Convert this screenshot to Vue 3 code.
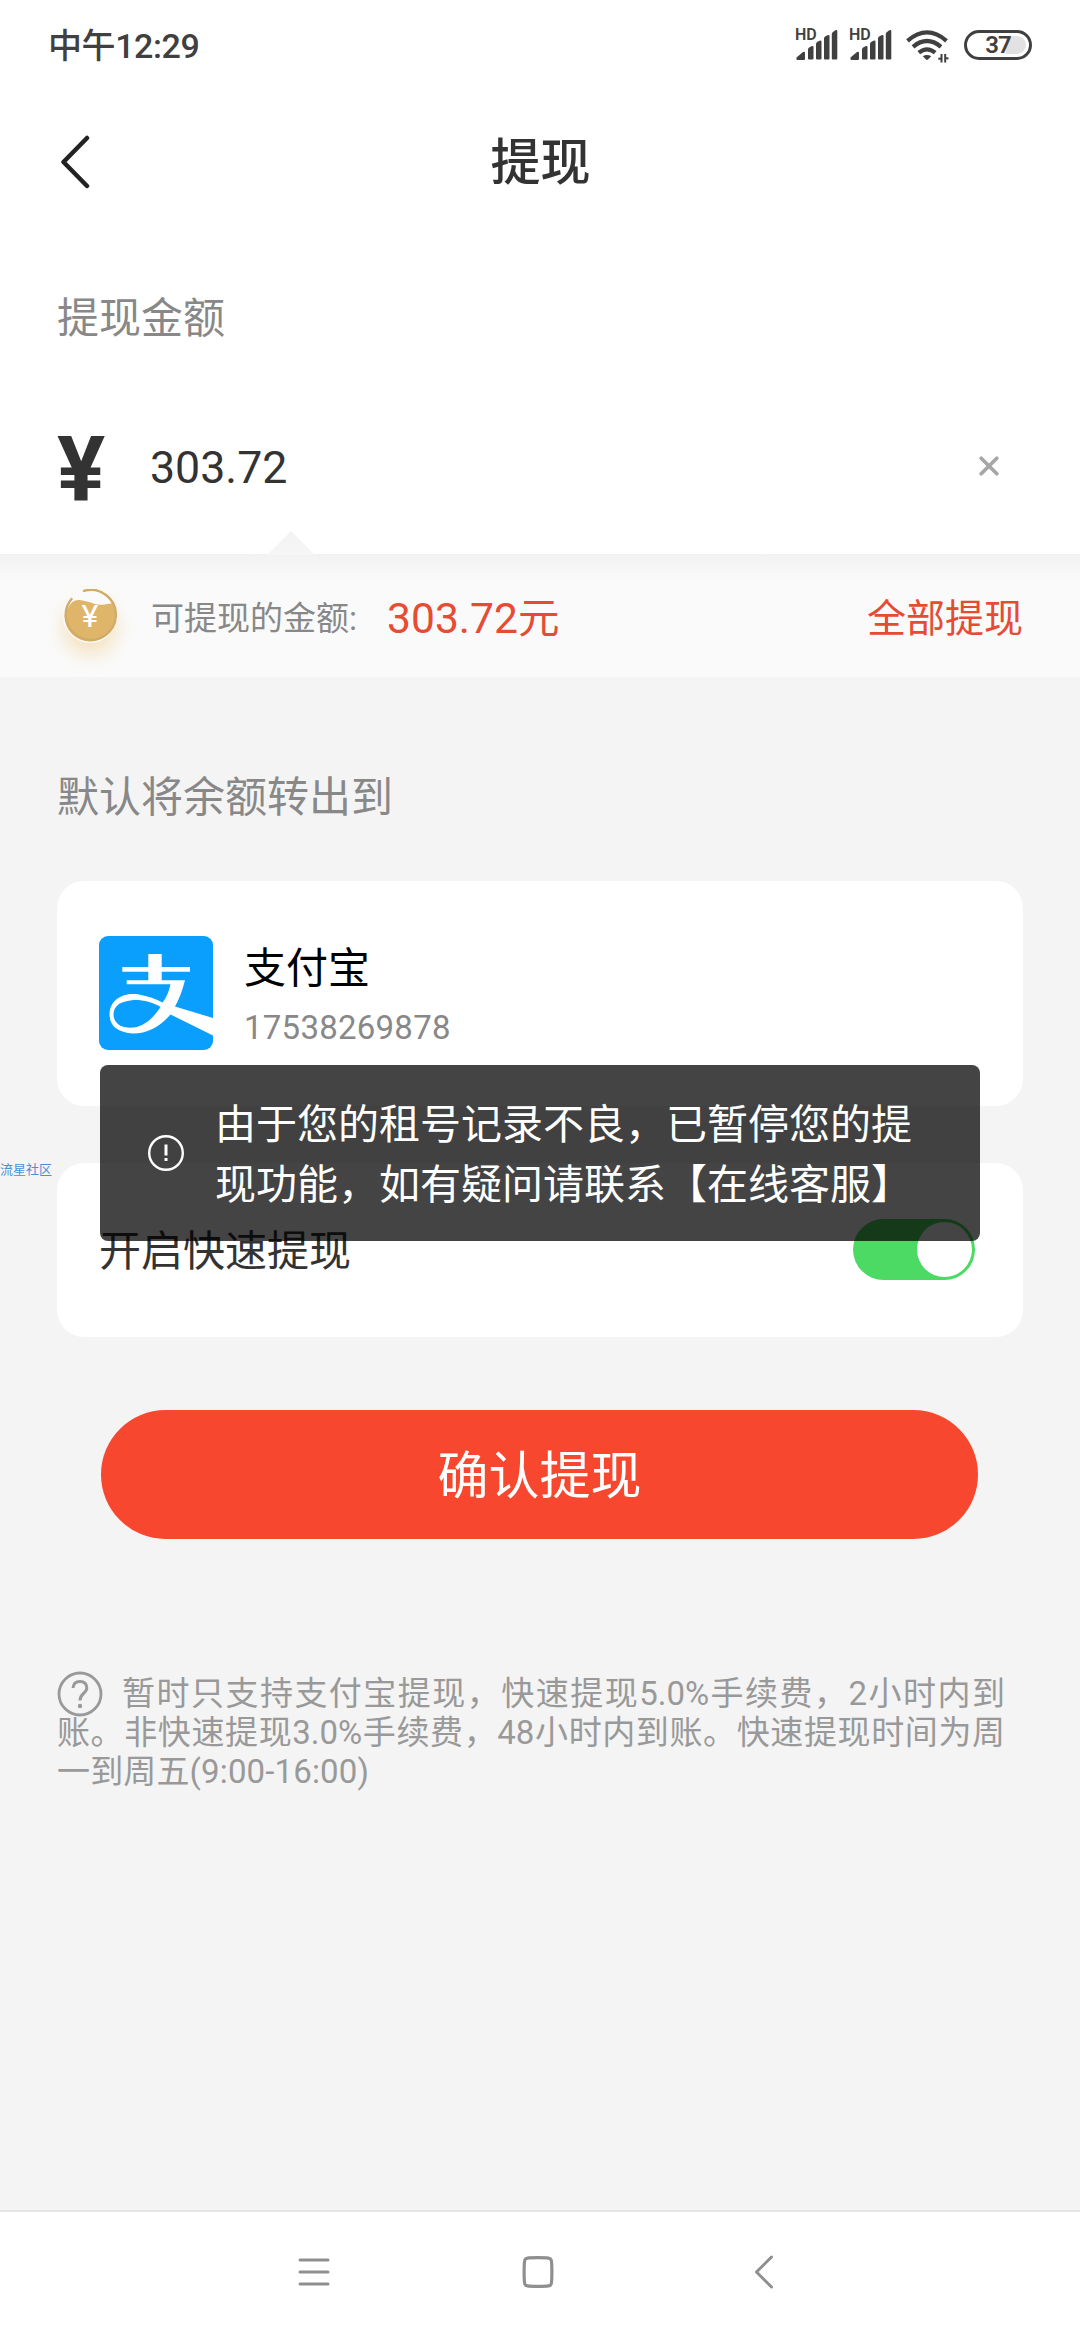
<script setup>
const simCards = [1, 2]
const account = { name: '支付宝', number: '17538269878' }
const balance = '303.72'
</script>

<template>
  <div class="page">
    <header class="status">
      <span class="time">中午12:29</span>
      <div class="indicators">
        <div v-for="sim in simCards" :key="sim" class="sim">
          <span class="hd">HD</span>
          <svg width="42" height="30" viewBox="0 0 42 30" fill="#404040">
            <path d="M.5 29v-1.5L7 22q2-1 2 1v6q0 1-1 1H1.500q-1 0-1-1z" />
            <path d="M12 19.500q0-1.500 1.500-2.200l2-1q2-.8 2 1V28.500q0 1-1 1H13q-1 0-1-1z" />
            <path d="M20 14q0-1.500 1.500-2.200l2-1q2-.8 2 1V28.500q0 1-1 1H21q-1 0-1-1z" />
            <path d="M28 8.500q0-1.500 1.500-2.200l2-1q2-.8 2 1V28.500q0 1-1 1H29q-1 0-1-1z" />
            <path d="M35.800 4q0-1.500 1.500-2.200l2-1.500q2-.8 2 1V28.500q0 1-1 1h-3.500q-1 0-1-1z" />
          </svg>
        </div>
        <svg class="wifi" width="44" height="34" viewBox="0 0 44 34" fill="none" stroke="#404040" stroke-width="4.200">
          <path d="M1.500 10.800Q21 -6 40.500 10.800" />
          <path d="M7 16.800Q21 5.200 35 16.800" />
          <path d="M12.800 22.600Q21 16 29.200 22.600" />
          <path d="M16.800 26.300Q21 23.500 25.200 26.300L22 29.500Q21 30.300 20 29.500z" fill="#404040" stroke="none" />
          <path d="M35.500 24v8.500M32.300 28.500l3.200.5M39.200 32.500V24M42.500 28.500l-3.300-.5" stroke-width="2" />
        </svg>
        <div class="battery">
          <i class="level"></i>
          <span>37</span>
        </div>
      </div>
    </header>

    <nav class="bar">
      <svg class="back" width="32" height="56" viewBox="0 0 32 56" fill="none" stroke="#222" stroke-width="4.500" stroke-linecap="round" stroke-linejoin="round">
        <path d="M29 4L5.500 28L29 52" />
      </svg>
      <h1>提现</h1>
    </nav>

    <section class="amount">
      <p class="label">提现金额</p>
      <div class="entry">
        <span class="yen">¥</span>
        <span class="value">{{ balance }}</span>
        <svg class="clear" width="20" height="20" viewBox="0 0 20 20" stroke="#a6a6a6" stroke-width="3.700" stroke-linecap="round">
          <path d="M2.200 2.200l15.600 15.600M17.800 2.200L2.200 17.800" />
        </svg>
      </div>
    </section>

    <section class="available">
      <svg class="pointer" width="48" height="24" viewBox="0 0 48 24">
        <defs>
          <linearGradient id="tip" x1="0" y1="0" x2="0" y2="1">
            <stop offset="0" stop-color="#f3f3f3" />
            <stop offset="1" stop-color="#f6f6f6" />
          </linearGradient>
        </defs>
        <path d="M24 0l24 24H0z" fill="url(#tip)" />
      </svg>
      <div class="coin">
        <svg width="54" height="54" viewBox="0 0 54 54" fill="none">
          <path d="M5 19Q9 10 17 11q10 2 15 4t18-1q3 8 2.500 13a25.500 25.500 0 0 1-51 0q0-4 3.500-8z" fill="#dfb569" />
          <path d="M8.500 10A25 25 0 1 0 21 1.800" stroke="#d2ab68" stroke-width="2.400" stroke-linecap="round" />
        </svg>
        <span>¥</span>
      </div>
      <span class="caption">可提现的金额:</span>
      <span class="sum">{{ balance }}<b>元</b></span>
      <a class="all">全部提现</a>
    </section>

    <main>
      <p class="label">默认将余额转出到</p>

      <div class="card account">
        <svg width="114" height="114" viewBox="0 0 114 114">
          <rect width="114" height="114" rx="9" fill="#0a9ffd" />
          <g fill="#fff">
            <path d="M49.300 18H62.700V31H91V35.700H62.700V44.300H86Q82 60 76 70.500L114 82V99.500L71.500 78.500Q55 97.500 34 97.500Q10.500 96 10.500 78C11 63 25 56 40 58.500C49 60 57 63 63.500 66.500Q69 60 71.500 48.300H27.700V44.300H49.300V35.700H23.300V31H49.300z" />
            <path d="M61.500 71C53 66 43 63.500 33 64.200C20 65.500 14.500 71 14.500 78.500C15 89 24 92.500 35 91.500C46 90 55 81 61.500 71z" fill="#0a9ffd" />
          </g>
        </svg>
        <div class="who">
          <strong>{{ account.name }}</strong>
          <span>{{ account.number }}</span>
        </div>
      </div>

      <div class="card fast">
        <span>开启快速提现</span>
        <div class="switch"><i></i></div>
      </div>

      <button class="confirm">确认提现</button>

      <div class="note">
        <div class="line first">
          <svg width="46" height="46" viewBox="0 0 46 46" fill="none" stroke="#999">
            <circle cx="23" cy="23" r="21" stroke-width="2.800" />
            <path d="M16 17q.5-6.500 7-6.500t6.800 6.300q0 3-3.300 5.700T23 29.500" stroke-width="3" />
            <circle cx="23" cy="35" r="2.200" fill="#999" stroke="none" />
          </svg>
          <span>暂时只支持支付宝提现，快速提现5.0%手续费，2小时内到</span>
        </div>
        <div class="line">账。非快速提现3.0%手续费，48小时内到账。快速提现时间为周</div>
        <div class="line last">一到周五(9:00-16:00)</div>
      </div>
    </main>

    <footer>
      <svg width="32" height="32" viewBox="0 0 32 32" stroke="#8f8f8f" stroke-width="3" stroke-linecap="round">
        <path d="M2 4h28M2 16h28M2 28h28" />
      </svg>
      <svg class="home" width="34" height="34" viewBox="0 0 34 34" fill="none" stroke="#8f8f8f" stroke-width="3.200">
        <path d="M17 2.600c11 0 12.500.4 13.200 2.500c.9 3 .9 20.800 0 23.800c-.7 2.100-2.200 2.500-13.200 2.500s-12.500-.4-13.200-2.500c-.9-3-.9-20.800 0-23.800C4.500 3 6 2.600 17 2.600z" />
      </svg>
      <svg width="20" height="34" viewBox="0 0 20 34" fill="none" stroke="#8f8f8f" stroke-width="3" stroke-linecap="round" stroke-linejoin="round">
        <path d="M17.500 2L2.500 17l15 15" />
      </svg>
    </footer>

    <span class="watermark">流星社区</span>

    <div class="toast">
      <svg width="38" height="38" viewBox="0 0 38 38" fill="none" stroke="#fff">
        <circle cx="19" cy="19" r="16.800" stroke-width="2.400" />
        <path d="M19 10.500v11" stroke-width="3" />
        <path d="M19 24v3" stroke-width="3" />
      </svg>
      <p>由于您的租号记录不良，已暂停您的提<br />现功能，如有疑问请联系【在线客服】</p>
    </div>
  </div>
</template>

<style>
body {
  margin: 0;
  background: #f4f4f4;
}
</style>

<style scoped>
.page {
  position: relative;
  display: flex;
  flex-direction: column;
  width: 1080px;
  height: 2340px;
  overflow: hidden;
  background: #f4f4f4;
  color: #333;
  font-family: Roboto, "Noto Sans CJK SC", sans-serif;
}
.page * {
  box-sizing: border-box;
}
p,
h1 {
  margin: 0;
}
svg {
  display: block;
  flex: none;
}

.status {
  display: flex;
  justify-content: space-between;
  height: 90px;
  padding: 0 48px 0 48px;
  background: #fff;
  color: #404040;
}
.time {
  font-size: 34px;
  font-weight: 500;
  letter-spacing: -0.4px;
  line-height: 92px;
}
.indicators {
  display: flex;
  padding-top: 30px;
}
.sim {
  position: relative;
  width: 54px;
}
.hd {
  position: absolute;
  left: -1px;
  top: -3px;
  font-size: 16px;
  font-weight: 600;
  line-height: 16px;
}
.wifi {
  margin: 0 14px 0 2px;
}
.battery {
  position: relative;
  width: 68px;
  height: 30px;
  border: 3.400px solid #404040;
  border-radius: 15px;
  font-size: 24px;
  font-weight: 600;
  letter-spacing: -1px;
  line-height: 25px;
  text-align: center;
}
.battery span {
  position: relative;
}
.level {
  position: absolute;
  right: 3px;
  top: 3px;
  width: 20px;
  height: 18px;
  border-radius: 0 9px 9px 0;
  background: #e2e2e2;
}

.bar {
  display: flex;
  align-items: center;
  height: 144px;
  padding: 0 58px;
  background: #fff;
}
.bar h1 {
  flex: 1;
  padding: 2px 31px 0 0;
  font-size: 50px;
  font-weight: 500;
  line-height: 60px;
  text-align: center;
}

.label {
  color: #888;
  font-size: 42px;
  line-height: 60px;
}
.amount {
  height: 320px;
  padding: 55px 57px 0;
  background: #fff;
}
.entry {
  display: flex;
  align-items: center;
  height: 130px;
  margin-top: 54px;
}
.yen {
  width: 93px;
  padding-top: 6px;
  font-size: 90px;
  font-weight: 700;
  line-height: 130px;
}
.value {
  flex: 1;
  font-size: 44.700px;
  line-height: 130px;
}
.clear {
  margin: -5px 24px 0 0;
}

.available {
  position: relative;
  display: flex;
  align-items: center;
  height: 123px;
  padding: 0 57px 0 63px;
  background: linear-gradient(#f2f2f2, #fafafa 28px);
  line-height: 60px;
}
.pointer {
  position: absolute;
  left: 267px;
  top: -23px;
}
.coin {
  position: relative;
  width: 54px;
  height: 54px;
  margin-right: 34px;
  border-radius: 50%;
  box-shadow: 0 12px 18px rgba(235, 185, 90, 0.35);
}
.coin span {
  position: absolute;
  inset: 0;
  color: #fff;
  font-size: 32px;
  line-height: 54px;
  text-align: center;
}
.caption,
.sum,
.all {
  padding-top: 6px;
}
.caption {
  width: 236px;
  color: #888;
  font-size: 33px;
}
.sum {
  flex: 1;
  color: #e64b33;
  font-size: 42.600px;
}
.sum b {
  font-size: 41.500px;
  font-weight: 400;
}
.all {
  color: #e64b33;
  font-size: 39px;
}

main {
  display: flex;
  flex: 1;
  flex-direction: column;
  padding: 91px 57px 0;
}
.card {
  display: flex;
  border-radius: 27px;
  background: #fff;
}
.account {
  height: 225px;
  margin-top: 53px;
  padding: 55px 42px;
}
.who {
  display: flex;
  flex-direction: column;
  margin-left: 31px;
}
.who strong {
  color: #000;
  font-size: 42px;
  font-weight: 400;
  line-height: 66px;
}
.who span {
  color: #888;
  font-size: 33px;
  letter-spacing: 0.25px;
  line-height: 52px;
}
.fast {
  align-items: center;
  justify-content: space-between;
  height: 174px;
  margin-top: 57px;
  padding: 0 48px 2px 42px;
  font-size: 42px;
}
.fast span {
  padding-bottom: 3px;
}
.switch {
  display: flex;
  justify-content: flex-end;
  width: 122px;
  height: 61px;
  padding: 3px;
  border-radius: 31px;
  background: #4cd964;
}
.switch i {
  width: 55px;
  height: 55px;
  border-radius: 50%;
  background: #fff;
}
.confirm {
  height: 129px;
  margin: 73px 45px 0 44px;
  padding: 2px 0 0;
  border: 0;
  border-radius: 65px;
  background: #f8472f;
  color: #fff;
  font: 400 51px/129px Roboto, "Noto Sans CJK SC", sans-serif;
}
.note {
  width: 948px;
  margin-top: 132px;
  color: #999;
  font-size: 33px;
}
.line {
  height: 39px;
  line-height: 39px;
  text-align-last: justify;
  white-space: nowrap;
}
.first {
  display: flex;
  height: 42px;
  line-height: 46px;
}
.first span {
  flex: 1;
  margin-left: 19px;
}
.last {
  letter-spacing: 0.15px;
  text-align-last: left;
}

footer {
  display: flex;
  align-items: center;
  justify-content: space-between;
  height: 130px;
  padding: 0 306px 8px 298px;
  border-top: 2px solid #e4e4e4;
  background: #fff;
}
.home {
  margin-right: 8px;
}

.watermark {
  position: absolute;
  left: 0;
  top: 1160px;
  color: #4a90d9;
  font-size: 13px;
  line-height: 20px;
}
.toast {
  position: absolute;
  left: 100px;
  top: 1065px;
  display: flex;
  align-items: center;
  width: 880px;
  height: 176px;
  padding-left: 47px;
  border-radius: 8px;
  background: rgba(0, 0, 0, 0.735);
  color: #fff;
}
.toast p {
  margin-left: 30px;
  padding-top: 3px;
  font-size: 41px;
  line-height: 60px;
  white-space: nowrap;
}
</style>
